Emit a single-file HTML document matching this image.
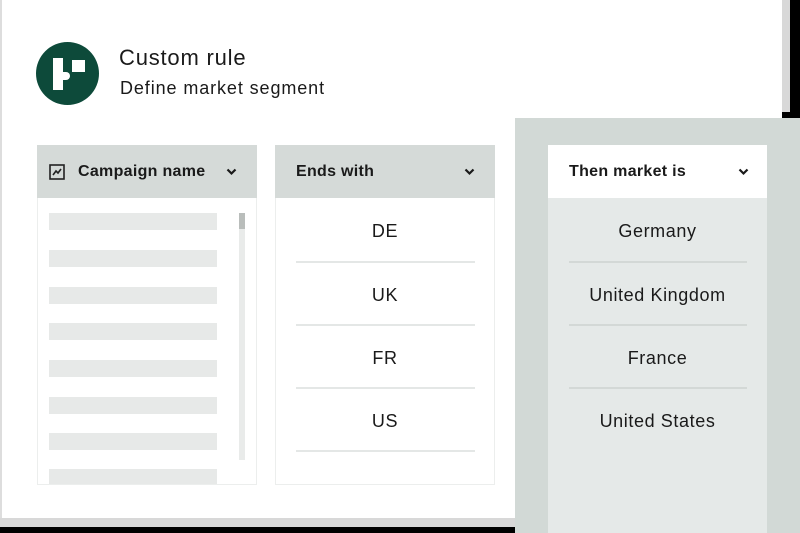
<!DOCTYPE html>
<html><head><style>
*{margin:0;padding:0;box-sizing:border-box}
body{width:800px;height:533px;overflow:hidden;background:#000;font-family:"Liberation Sans",sans-serif;color:#1a1a1a;position:relative}
.card{position:absolute;left:0;top:0;width:782px;height:518px;background:#fff;border-left:2px solid #ddd}
.edge{position:absolute;left:782px;top:0;width:8px;height:112px;background:#d8d8d8}
.bot{position:absolute;left:0;top:518px;width:520px;height:9px;background:#d8d8d8}
.abs{position:absolute}
.hdr{position:absolute;height:53px;font-size:16px;font-weight:bold;display:flex;align-items:center;letter-spacing:0.3px}
.chev{position:absolute}
.bar{position:absolute;left:49px;width:168px;height:17px;background:#e7e9e8}
.div{position:absolute;height:2px;background:#e4e7e6}
.item{position:absolute;text-align:center;font-size:18px;letter-spacing:0.6px}
</style></head><body>
<div class="card"></div>
<div class="edge"></div>
<div class="bot"></div>
<div class="abs" style="left:36px;top:42px;width:63px;height:63px;border-radius:50%;background:#0d4a3a"></div>
<div class="abs" style="left:53px;top:58px;width:10px;height:32px;background:#fff"></div>
<div class="abs" style="left:72px;top:60px;width:13px;height:12px;background:#fff"></div>
<div class="abs" style="left:63px;top:72px;width:7px;height:8px;background:#fff;border-radius:0 4px 4px 0"></div>
<div class="abs" style="left:119px;top:45px;font-size:22px;letter-spacing:0.8px">Custom rule</div>
<div class="abs" style="left:120px;top:78px;font-size:18px;letter-spacing:0.9px">Define market segment</div>

<div class="abs" style="left:37px;top:145px;width:220px;height:340px;border:1px solid #eceeed"></div>
<div class="hdr" style="left:37px;top:145px;width:220px;background:#d5dad8;padding-left:41px">Campaign name</div>
<svg class="abs" style="left:49px;top:164px" width="16" height="16" viewBox="0 0 16 16"><rect x="1" y="1" width="14" height="14" fill="none" stroke="#222" stroke-width="1.6"/><path d="M4 11 L7 7 L9 9 L12 5" fill="none" stroke="#222" stroke-width="1.6"/></svg>
<svg class="chev" style="left:226px;top:168px" width="11" height="8" viewBox="0 0 11 8"><path d="M1.5 1.5 L5.5 5.5 L9.5 1.5" fill="none" stroke="#1a1a1a" stroke-width="2.2"/></svg>
<div class="bar" style="top:213px"></div><div class="bar" style="top:250px"></div><div class="bar" style="top:287px"></div><div class="bar" style="top:323px"></div><div class="bar" style="top:360px"></div><div class="bar" style="top:397px"></div><div class="bar" style="top:433px"></div><div class="bar" style="top:469px;height:15px"></div>
<div class="abs" style="left:239px;top:213px;width:6px;height:247px;background:#e9ebea"></div>
<div class="abs" style="left:239px;top:213px;width:6px;height:16px;background:#b9bdbb"></div>

<div class="abs" style="left:275px;top:145px;width:220px;height:340px;border:1px solid #eceeed"></div>
<div class="hdr" style="left:275px;top:145px;width:220px;background:#d5dad8;padding-left:21px">Ends with</div>
<svg class="chev" style="left:464px;top:168px" width="11" height="8" viewBox="0 0 11 8"><path d="M1.5 1.5 L5.5 5.5 L9.5 1.5" fill="none" stroke="#1a1a1a" stroke-width="2.2"/></svg>
<div class="item" style="left:275px;width:220px;top:221px">DE</div>
<div class="item" style="left:275px;width:220px;top:285px">UK</div>
<div class="item" style="left:275px;width:220px;top:348px">FR</div>
<div class="item" style="left:275px;width:220px;top:411px">US</div>
<div class="div" style="left:296px;width:179px;top:261px"></div><div class="div" style="left:296px;width:179px;top:324px"></div><div class="div" style="left:296px;width:179px;top:387px"></div><div class="div" style="left:296px;width:179px;top:450px"></div>

<div class="abs" style="left:515px;top:118px;width:285px;height:415px;background:#d2d9d6"></div>
<div class="abs" style="left:548px;top:145px;width:219px;height:388px;background:#e5e9e8"></div>
<div class="hdr" style="left:548px;top:145px;width:219px;background:#fff;padding-left:21px">Then market is</div>
<svg class="chev" style="left:738px;top:168px" width="11" height="8" viewBox="0 0 11 8"><path d="M1.5 1.5 L5.5 5.5 L9.5 1.5" fill="none" stroke="#1a1a1a" stroke-width="2.2"/></svg>
<div class="item" style="left:548px;width:219px;top:221px">Germany</div>
<div class="item" style="left:548px;width:219px;top:285px">United Kingdom</div>
<div class="item" style="left:548px;width:219px;top:348px">France</div>
<div class="item" style="left:548px;width:219px;top:411px">United States</div>
<div class="div" style="left:569px;width:178px;top:261px;background:#d3d8d6"></div><div class="div" style="left:569px;width:178px;top:324px;background:#d3d8d6"></div><div class="div" style="left:569px;width:178px;top:387px;background:#d3d8d6"></div>
</body></html>
